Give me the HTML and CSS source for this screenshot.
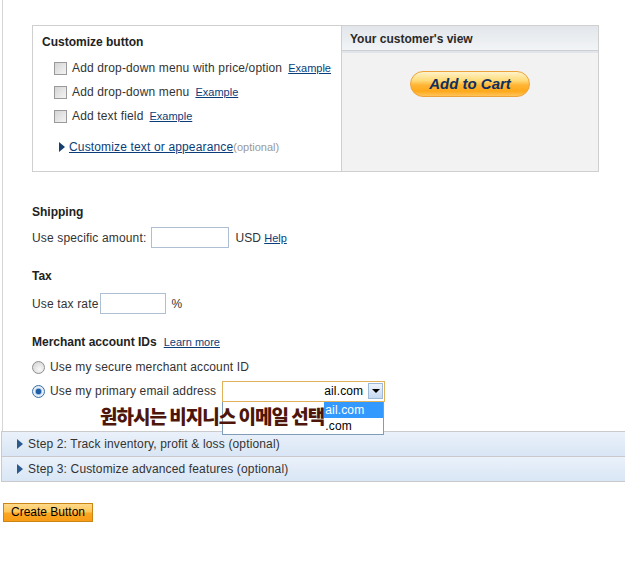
FILE: index.html
```html
<!DOCTYPE html>
<html>
<head>
<meta charset="utf-8">
<link rel="stylesheet" href="styles.css">
</head>
<body>
<div class="page">
  <div class="box">
    <div class="left">
      <div class="title">Customize button</div>
      <ul class="opts">
        <li><input type="checkbox" class="cb"><span class="lbl">Add drop-down menu with price/option</span><a class="small">Example</a></li>
        <li><input type="checkbox" class="cb"><span class="lbl">Add drop-down menu</span><a class="small">Example</a></li>
        <li><input type="checkbox" class="cb"><span class="lbl">Add text field</span><a class="small">Example</a></li>
      </ul>
      <div class="customize"><span class="tri"></span><a class="link">Customize text or appearance</a><span class="opt">(optional)</span></div>
    </div>
    <div class="right">
      <div class="rhead">Your customer's view</div>
      <div class="preview"><span class="atc">Add to Cart</span></div>
    </div>
  </div>

  <div class="section ship">
    <div class="heading">Shipping</div>
    <div class="row"><span>Use specific amount:</span><span class="field w-ship"></span><span>USD</span><a class="small">Help</a></div>
  </div>

  <div class="section tax">
    <div class="heading">Tax</div>
    <div class="row"><span>Use tax rate</span><span class="field w-tax"></span><span class="pct">%</span></div>
  </div>

  <div class="section merchant">
    <div class="heading">Merchant account IDs<a class="small">Learn more</a></div>
    <div class="rrow r1"><input type="radio" class="rb" name="m"><span>Use my secure merchant account ID</span></div>
    <div class="rrow r2">
      <input type="radio" class="rb" name="m" checked><span>Use my primary email address</span>
      <div class="select">
        <span class="sval">ail.com</span>
        <span class="sbtn"><span class="down"></span></span>
        <ul class="list">
          <li class="hl"><span class="mask"></span><span>ail.com</span></li>
          <li><span class="mask"></span><span>.com</span></li>
        </ul>
      </div>
      <div class="note">원하시는 비지니스 이메일 선택</div>
    </div>
  </div>
</div>

<div class="steps">
  <div class="step"><span class="stri"></span>Step 2: Track inventory, profit &amp; loss (optional)</div>
  <div class="step"><span class="stri"></span>Step 3: Customize advanced features (optional)</div>
</div>

<button class="create">Create Button</button>
</body>
</html>
```

FILE: styles.css
```css
html, body {
  margin: 0;
  padding: 0;
  background: #fff;
}
body {
  font-family: "Liberation Sans", Arial, sans-serif;
  font-size: 12px;
  letter-spacing: 0.15px;
  color: #333;
  width: 625px;
  overflow: hidden;
}
a {
  color: #0b3d7a;
  text-decoration: underline;
  cursor: pointer;
}
.page {
  margin-left: 2px;
  border-left: 1px solid #d6d6d6;
  padding: 25px 0 30px 29px;
}
.box {
  display: flex;
  width: 567px;
  height: 147px;
  border: 1px solid #cfcfcf;
  box-sizing: border-box;
}
.left {
  width: 308px;
  padding: 9px 0 0 9px;
  box-sizing: border-box;
}
.title {
  font-weight: bold;
  line-height: 14px;
  color: #222;
  letter-spacing: 0;
}
.opts {
  list-style: none;
  margin: 7px 0 0 0;
  padding: 0 0 0 12px;
}
.opts li {
  display: flex;
  align-items: center;
  height: 24px;
}
.cb {
  appearance: none;
  -webkit-appearance: none;
  width: 13px;
  height: 13px;
  margin: 0 5px 0 0;
  border: 1px solid #9a9a9a;
  background: linear-gradient(135deg, #d4d4d4, #f4f4f4);
  box-sizing: border-box;
}
.lbl {
  margin-right: 6px;
}
.small {
  font-size: 11px;
  letter-spacing: 0;
}
.customize {
  display: flex;
  align-items: center;
  margin: 12px 0 0 17px;
}
.tri {
  width: 0;
  height: 0;
  border-top: 5px solid transparent;
  border-bottom: 5px solid transparent;
  border-left: 6px solid #173f6e;
  margin-right: 4px;
}
.link {
  font-size: 12px;
}
.opt {
  font-size: 11px;
  color: #999;
  letter-spacing: 0;
}
.right {
  flex: 1;
  border-left: 1px solid #cfcfcf;
  background: #f2f2f2;
}
.rhead {
  height: 24px;
  line-height: 27px;
  padding-left: 8px;
  font-weight: bold;
  letter-spacing: 0;
  color: #2a2a2a;
  background: linear-gradient(#e2e6ea, #f2f4f6);
  border-bottom: 1px solid #ccd0d5;
  box-shadow: 0 2px 0 #e1e4e8;
}
.preview {
  display: flex;
  justify-content: center;
  padding-top: 20px;
}
.atc {
  width: 120px;
  height: 26px;
  box-sizing: border-box;
  border: 1px solid #eda33a;
  border-radius: 13px;
  background: linear-gradient(#fff3c8 0%, #ffdb7a 35%, #ffb534 55%, #ffa91c 80%, #ffc45a 100%);
  font-style: italic;
  font-weight: bold;
  font-size: 15px;
  letter-spacing: 0;
  color: #0f2f5f;
  text-align: center;
  line-height: 24px;
}
.section .heading {
  font-weight: bold;
  line-height: 14px;
  letter-spacing: 0;
  color: #222;
  display: flex;
  align-items: baseline;
}
.heading .small {
  font-weight: normal;
  margin-left: 7px;
}
.ship { margin-top: 33px; }
.tax { margin-top: 21px; }
.merchant { margin-top: 21px; }
.row {
  display: flex;
  align-items: center;
  height: 21px;
  margin-top: 8px;
}
.tax .row { margin-top: 10px; }
.field {
  display: inline-block;
  height: 21px;
  box-sizing: border-box;
  border: 1px solid #aebfd4;
  background: #fff;
  margin: 0 6px 0 3px;
}
.w-ship { width: 78px; margin-left: 5px; }
.w-tax { width: 66px; margin-left: 1px; }
.pct { margin-left: 0; }
.row .small { margin-left: 3px; }
.rrow {
  display: flex;
  align-items: center;
  height: 20px;
}
.r1 { margin-top: 8px; }
.r2 { margin-top: 4px; position: relative; }
.rb {
  appearance: none;
  -webkit-appearance: none;
  width: 13px;
  height: 13px;
  margin: 0 5px 0 0;
  border-radius: 50%;
  border: 1px solid #8f8f8f;
  background: radial-gradient(circle at 60% 65%, #f8f8f8, #d0d0d0);
  box-sizing: border-box;
  position: relative;
}
.rb:checked {
  border-color: #3a6ea5;
  background: radial-gradient(circle, #1f5fa8 0 2.5px, #8fb8e3 3px, #e8f0f8 4px, #d8e2ee);
}
.select {
  position: relative;
  display: flex;
  align-items: center;
  justify-content: flex-end;
  margin-left: 6px;
  width: 163px;
  height: 21px;
  box-sizing: border-box;
  border: 1px solid #e2b25a;
  background: #fff;
  padding-right: 1px;
}
.sval {
  font-size: 12px;
  color: #000;
  margin-right: 5px;
}
.sbtn {
  width: 15px;
  height: 16px;
  box-sizing: border-box;
  border: 1px solid #9eb8d8;
  background: linear-gradient(#eef4fc, #c6d9f1);
  display: flex;
  align-items: center;
  justify-content: center;
}
.down {
  width: 0;
  height: 0;
  border-left: 4px solid transparent;
  border-right: 4px solid transparent;
  border-top: 4px solid #000;
}
.list {
  position: absolute;
  left: -1px;
  top: 20px;
  width: 162px;
  margin: 0;
  padding: 0;
  list-style: none;
  border: 1px solid #7f9db9;
  border-top: none;
  background: #fff;
  z-index: 2;
  box-sizing: border-box;
}
.list li {
  display: flex;
  height: 16px;
  line-height: 16px;
  font-size: 12px;
  color: #000;
}
.list li .mask {
  width: 101px;
  background: #fff;
}
.list li.hl span:last-child {
  flex: 1;
  background: #3399ff;
  color: #fff;
}
.list li span:last-child {
  padding-left: 1px;
}
.note {
  position: absolute;
  left: 68px;
  top: 24px;
  z-index: 3;
  font-family: "Noto Sans CJK KR", sans-serif;
  font-weight: 900;
  font-size: 19px;
  line-height: 22px;
  letter-spacing: -1px;
  color: #4e160a;
  white-space: nowrap;
}
.steps {
  margin-left: 1px;
  border: 1px solid #cacaca;
  border-right: none;
}
.step {
  display: flex;
  align-items: center;
  height: 24px;
  padding-left: 15px;
  font-size: 12px;
  color: #333;
  background: linear-gradient(#eaf1fa, #d9e6f5);
}
.step + .step {
  border-top: 1px solid #cacaca;
}
.stri {
  width: 0;
  height: 0;
  border-top: 5px solid transparent;
  border-bottom: 5px solid transparent;
  border-left: 6px solid #2a5a8c;
  margin-right: 5px;
}
.create {
  display: block;
  margin: 21px 0 0 3px;
  height: 19px;
  padding: 0 7px;
  font-family: "Liberation Sans", Arial, sans-serif;
  font-size: 12px;
  letter-spacing: 0;
  color: #000;
  border: 1px solid #c98516;
  background: linear-gradient(#ffd98c 0%, #ffc85a 45%, #fba622 55%, #f99c14 100%);
  border-radius: 0;
  line-height: 17px;
}
```
